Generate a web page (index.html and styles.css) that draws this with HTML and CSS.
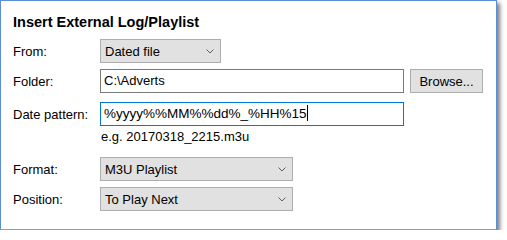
FILE: index.html
```html
<!DOCTYPE html>
<html lang="en">
<head>
    <meta charset="UTF-8">
    <title>Insert External Log/Playlist</title>
    <link rel="stylesheet" href="styles.css">
</head>
<body>
    <div class="panel">
        <h1 class="panel-title">Insert External Log/Playlist</h1>

        <div class="row row-from">
            <label class="label">From:</label>
            <div class="select select-from">
                <span>Dated file</span>
                <svg class="chevron" width="8" height="5" viewBox="0 0 8 5"><path d="M0.5 0.5 L4 4 L7.5 0.5" fill="none" stroke="#606060" stroke-width="1"/></svg>
            </div>
        </div>

        <div class="row row-folder">
            <label class="label">Folder:</label>
            <div class="input">C:\Adverts</div>
            <button class="button">Browse...</button>
        </div>

        <div class="row row-date">
            <label class="label">Date pattern:</label>
            <div class="input input-focus">%yyyy%%MM%%dd%_%HH%15<span class="caret"></span></div>
        </div>
        <div class="hint">e.g. 20170318_2215.m3u</div>

        <div class="row row-format">
            <label class="label">Format:</label>
            <div class="select select-wide">
                <span>M3U Playlist</span>
                <svg class="chevron" width="8" height="5" viewBox="0 0 8 5"><path d="M0.5 0.5 L4 4 L7.5 0.5" fill="none" stroke="#606060" stroke-width="1"/></svg>
            </div>
        </div>

        <div class="row row-position">
            <label class="label">Position:</label>
            <div class="select select-wide">
                <span>To Play Next</span>
                <svg class="chevron" width="8" height="5" viewBox="0 0 8 5"><path d="M0.5 0.5 L4 4 L7.5 0.5" fill="none" stroke="#606060" stroke-width="1"/></svg>
            </div>
        </div>
    </div>
</body>
</html>
```

FILE: styles.css
```css
body {
    margin: 0;
    background: #ffffff;
    font-family: "Liberation Sans", Arial, sans-serif;
    font-size: 13px;
    color: #000000;
}

.panel {
    width: 483px;
    height: 228px;
    border: 1px solid #5b8ed6;
    border-bottom-color: #9a9a9a;
    background: #ffffff;
    padding: 0 0 0 12px;
    box-shadow: 3px 3px 4px rgba(0, 0, 0, 0.5);
}

.panel-title {
    margin: 0;
    padding-top: 14px;
    font-size: 14.5px;
    font-weight: bold;
    line-height: 14px;
    height: 24px;
}

.row {
    display: flex;
    align-items: center;
    height: 24px;
}

.row-folder {
    margin-top: 6px;
}

.row-date {
    margin-top: 9px;
}

.row-format {
    margin-top: 11px;
}

.row-position {
    margin-top: 6px;
}

.label {
    width: 87px;
    flex: none;
}

.select {
    height: 24px;
    box-sizing: border-box;
    background: #e1e1e1;
    border: 1px solid #adadad;
    display: flex;
    align-items: center;
    justify-content: space-between;
    padding: 0 6px 0 4px;
}

.select-from {
    width: 121px;
}

.select-wide {
    width: 193px;
}

.chevron {
    display: block;
}

.input {
    width: 304px;
    height: 24px;
    box-sizing: border-box;
    border: 1px solid #7a7a7a;
    padding: 0 3px;
    line-height: 22px;
    white-space: nowrap;
}

.input-focus {
    border-color: #0078d7;
    font-size: 13.5px;
}

.caret {
    display: inline-block;
    width: 1px;
    height: 16px;
    background: #000000;
    vertical-align: -3px;
}

.button {
    margin-left: 6px;
    width: 73px;
    height: 24px;
    box-sizing: border-box;
    background: #e1e1e1;
    border: 1px solid #adadad;
    font-family: inherit;
    font-size: 13px;
    color: #000000;
    padding: 0;
}

.hint {
    margin-top: 2px;
    margin-left: 87px;
    padding-left: 1px;
    height: 18px;
    line-height: 18px;
}
```
